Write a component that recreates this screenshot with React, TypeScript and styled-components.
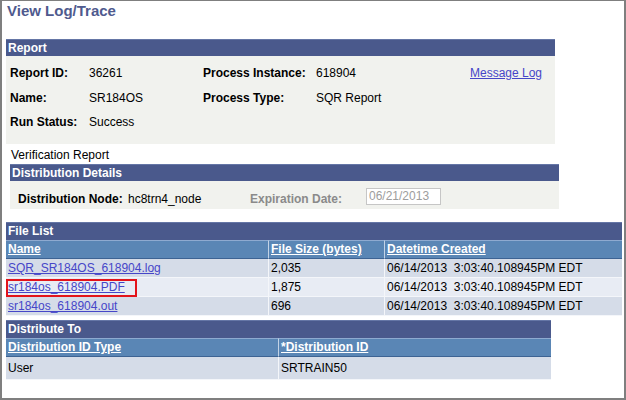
import React from "react";
import styled, { createGlobalStyle } from "styled-components";

const GlobalStyle = createGlobalStyle`
  html, body { margin: 0; padding: 0; background: #fff; }
  body {
    font-family: "Liberation Sans", Arial, sans-serif;
    font-size: 12px;
    color: #000;
  }
`;

const Frame = styled.div`
  box-sizing: border-box;
  width: 626px;
  height: 400px;
  border: 2px solid #7f7f7f;
  border-top-width: 1px;
  padding-left: 4px;
  overflow: hidden;
  display: flex;
  flex-direction: column;
  align-items: flex-start;
`;

const Title = styled.h1`
  margin: 0;
  padding: 1px 0 0 1px;
  font-size: 15px;
  line-height: 17px;
  font-weight: bold;
  color: #4f5a8e;
`;

const Section = styled.section<{ $w: number; $mt: number; $ml?: number }>`
  width: ${(p) => p.$w}px;
  margin-top: ${(p) => p.$mt}px;
  margin-left: ${(p) => p.$ml ?? 0}px;
`;

const Bar = styled.div<{ $h: number }>`
  box-sizing: border-box;
  height: ${(p) => p.$h}px;
  line-height: ${(p) => p.$h}px;
  background: #4a598c;
  border-top: 1px solid #6576a6;
  line-height: ${(p) => p.$h - 1}px;
  color: #fff;
  font-weight: bold;
  padding-left: 2px;
`;

const ReportBody = styled.div`
  box-sizing: border-box;
  height: 88px;
  background: #f1f2ee;
  padding: 5px 0 0 4px;
  display: grid;
  grid-template-columns: 79px 114px 113px 154px auto;
  grid-auto-rows: 24.5px;
  align-items: center;
  line-height: 14px;
`;

const Label = styled.span<{ $muted?: boolean }>`
  font-weight: bold;
  color: ${(p) => (p.$muted ? "#8a8a8a" : "#000")};
`;

const Value = styled.span``;

const Link = styled.a`
  color: #4646c8;
  text-decoration: underline;
  cursor: pointer;
`;

const Note = styled.div`
  margin: 4px 0 0 5px;
  line-height: 14px;
`;

const DistBody = styled.div`
  box-sizing: border-box;
  height: 28px;
  background: #f1f2ee;
  display: flex;
  align-items: flex-start;
  padding: 7px 0 0 8px;
`;

const Field = styled.div<{ $w: number }>`
  width: ${(p) => p.$w}px;
  margin-top: 4px;
  line-height: 14px;
  flex: none;
`;

const DateBox = styled.div`
  box-sizing: border-box;
  width: 75px;
  height: 17px;
  border: 1px solid #c6c6c6;
  background: #fff;
  color: #9d9d9d;
  line-height: 15px;
  padding-left: 2px;
`;

const Row = styled.div<{ $cols: string }>`
  display: grid;
  grid-template-columns: ${(p) => p.$cols};
`;

const HeadCell = styled.div`
  box-sizing: border-box;
  height: 19px;
  line-height: 17px;
  background: #5a86b5;
  border-top: 1px solid #8eaad0;
  border-bottom: 1px solid #3d6393;
  padding-left: 2px;
  color: #fff;
  font-weight: bold;
  text-decoration: underline;
  white-space: nowrap;
  & + & {
    border-left: 1px solid #c3d3e6;
  }
`;

const Cell = styled.div<{ $alt?: boolean; $h?: number }>`
  position: relative;
  box-sizing: border-box;
  height: ${(p) => p.$h ?? 19}px;
  line-height: ${(p) => (p.$h ?? 19) - 1}px;
  background: ${(p) => (p.$alt ? "#e8ecf4" : "#d5dce8")};
  border-bottom: 1px solid #f4f6fa;
  padding-left: 2px;
  white-space: nowrap;
  & + & {
    border-left: 1px solid #f4f6fa;
  }
`;

const Highlight = styled.span`
  position: absolute;
  left: 0;
  top: 1px;
  width: 131px;
  height: 18px;
  box-sizing: border-box;
  border: 2px solid #e3141b;
  pointer-events: none;
`;

const FILE_COLS = "262px 116px 1fr";
const DIST_COLS = "272px 1fr";

const files = [
  { name: "SQR_SR184OS_618904.log", size: "2,035" },
  { name: "sr184os_618904.PDF", size: "1,875", marked: true },
  { name: "sr184os_618904.out", size: "696" },
];

export default function App() {
  return (
    <>
      <GlobalStyle />
      <Frame>
        <Title>View Log/Trace</Title>

        <Section $w={549} $mt={20}>
          <Bar $h={17}>Report</Bar>
          <ReportBody>
            <Label>Report ID:</Label>
            <Value>36261</Value>
            <Label>Process Instance:</Label>
            <Value>618904</Value>
            <Link>Message Log</Link>

            <Label>Name:</Label>
            <Value>SR184OS</Value>
            <Label>Process Type:</Label>
            <Value>SQR Report</Value>
            <span />

            <Label>Run Status:</Label>
            <Value>Success</Value>
          </ReportBody>
        </Section>

        <Note>Verification Report</Note>

        <Section $w={549} $mt={2} $ml={4}>
          <Bar $h={17}>Distribution Details</Bar>
          <DistBody>
            <Field $w={110}>
              <Label>Distribution Node:</Label>
            </Field>
            <Field $w={122}>hc8trn4_node</Field>
            <Field $w={116}>
              <Label $muted>Expiration Date:</Label>
            </Field>
            <DateBox>06/21/2013</DateBox>
          </DistBody>
        </Section>

        <Section $w={616} $mt={13}>
          <Bar $h={18}>File List</Bar>
          <Row $cols={FILE_COLS}>
            <HeadCell>Name</HeadCell>
            <HeadCell>File Size (bytes)</HeadCell>
            <HeadCell>Datetime Created</HeadCell>
          </Row>
          {files.map((f, i) => (
            <Row $cols={FILE_COLS} key={f.name}>
              <Cell $alt={i % 2 === 1}>
                <Link>{f.name}</Link>
                {f.marked && <Highlight />}
              </Cell>
              <Cell $alt={i % 2 === 1}>{f.size}</Cell>
              <Cell $alt={i % 2 === 1}>06/14/2013&nbsp;&nbsp;3:03:40.108945PM EDT</Cell>
            </Row>
          ))}
        </Section>

        <Section $w={545} $mt={4}>
          <Bar $h={18}>Distribute To</Bar>
          <Row $cols={DIST_COLS}>
            <HeadCell>Distribution ID Type</HeadCell>
            <HeadCell>*Distribution ID</HeadCell>
          </Row>
          <Row $cols={DIST_COLS}>
            <Cell $h={23}>User</Cell>
            <Cell $h={23}>SRTRAIN50</Cell>
          </Row>
        </Section>
      </Frame>
    </>
  );
}
